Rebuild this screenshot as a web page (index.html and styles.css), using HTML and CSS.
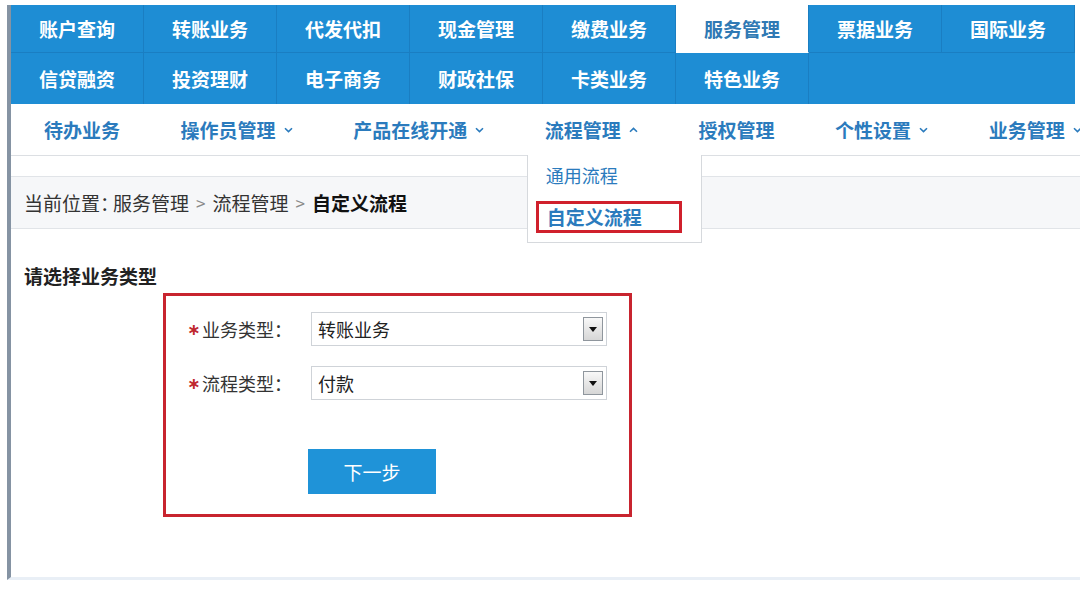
FILE: index.html
```html
<!DOCTYPE html>
<html lang="zh-CN">
<head>
<meta charset="utf-8">
<title>自定义流程</title>
<link rel="stylesheet" href="styles.css">
</head>
<body>
<div class="frame">
  <nav class="topnav">
    <a class="cell">账户查询</a>
    <a class="cell">转账业务</a>
    <a class="cell">代发代扣</a>
    <a class="cell">现金管理</a>
    <a class="cell">缴费业务</a>
    <a class="cell active">服务管理</a>
    <a class="cell">票据业务</a>
    <a class="cell">国际业务</a>
    <a class="cell row2">信贷融资</a>
    <a class="cell row2">投资理财</a>
    <a class="cell row2">电子商务</a>
    <a class="cell row2">财政社保</a>
    <a class="cell row2">卡类业务</a>
    <a class="cell row2">特色业务</a>
    <span class="cell row2 blank"></span>
  </nav>

  <div class="subnav">
    <span class="sitem">待办业务</span>
    <span class="sitem">操作员管理<svg class="chev" viewBox="0 0 9 6"><path d="M1 1.2 L4.5 4.6 L8 1.2" fill="none" stroke="currentColor" stroke-width="1.6"/></svg></span>
    <span class="sitem">产品在线开通<svg class="chev" viewBox="0 0 9 6"><path d="M1 1.2 L4.5 4.6 L8 1.2" fill="none" stroke="currentColor" stroke-width="1.6"/></svg></span>
    <span class="sitem open">流程管理<svg class="chev" viewBox="0 0 9 6"><path d="M1 4.8 L4.5 1.4 L8 4.8" fill="none" stroke="currentColor" stroke-width="1.6"/></svg>
      <div class="dropdown">
        <div class="ditem">通用流程</div>
        <div class="ditem current">自定义流程</div>
      </div>
    </span>
    <span class="sitem">授权管理</span>
    <span class="sitem">个性设置<svg class="chev" viewBox="0 0 9 6"><path d="M1 1.2 L4.5 4.6 L8 1.2" fill="none" stroke="currentColor" stroke-width="1.6"/></svg></span>
    <span class="sitem">业务管理<svg class="chev" viewBox="0 0 9 6"><path d="M1 1.2 L4.5 4.6 L8 1.2" fill="none" stroke="currentColor" stroke-width="1.6"/></svg></span>
  </div>

  <div class="crumb">
    <span class="lead">当前位置：</span><span>服务管理</span><span class="sep">&gt;</span><span>流程管理</span><span class="sep">&gt;</span><b class="here">自定义流程</b>
  </div>

  <h3 class="title">请选择业务类型</h3>

  <div class="formbox">
    <div class="row">
      <label class="label"><span class="req">∗</span>业务类型：</label>
      <div class="select"><span class="val">转账业务</span><span class="sbtn"><svg viewBox="0 0 8 5" class="tri"><path d="M0 0 H8 L4 5 Z" fill="#111"/></svg></span></div>
    </div>
    <div class="row">
      <label class="label"><span class="req">∗</span>流程类型：</label>
      <div class="select"><span class="val">付款</span><span class="sbtn"><svg viewBox="0 0 8 5" class="tri"><path d="M0 0 H8 L4 5 Z" fill="#111"/></svg></span></div>
    </div>
    <button class="next" type="button">下一步</button>
  </div>
</div>
</body>
</html>
```

FILE: styles.css
```css
html, body {
  margin: 0;
  overflow: hidden;
  background: #ffffff;
}
body {
  width: 1080px;
  height: 589px;
  box-sizing: border-box;
  padding-top: 5px;
  font-family: "Noto Sans CJK SC", "Noto Sans", sans-serif;
}
.frame {
  margin-left: 7px;
  border-left: 4px solid #8593a3;
  border-bottom: 3px solid #e9eff6;
  height: 575px;
  box-sizing: border-box;
}

/* top navigation */
.topnav {
  display: grid;
  grid-template-columns: repeat(8, 133px);
  grid-template-rows: 48px 51px;
  width: 1064px;
  background: #1e8dd4;
}
.cell {
  display: flex;
  align-items: center;
  justify-content: center;
  color: #ffffff;
  font-size: 19px;
  font-weight: 700;
  border-right: 1px solid #1a7ec2;
  border-bottom: 1px solid #1a7ec2;
  box-sizing: border-box;
}
.cell.row2 {
  border-bottom: none;
}
.cell.active {
  background: #ffffff;
  color: #2f79b4;
  border-bottom-color: #ffffff;
}
.cell.blank {
  grid-column: span 2;
  border-right: none;
}

/* sub navigation */
.subnav {
  height: 51px;
  border-bottom: 1px solid #dcdfe3;
  display: flex;
  align-items: center;
  gap: 60.6px;
  padding-left: 33px;
  white-space: nowrap;
}
.sitem {
  position: relative;
  display: flex;
  align-items: center;
  height: 100%;
  font-size: 19px;
  font-weight: 700;
  color: #2b7bbd;
  flex: none;
}
.chev {
  width: 9px;
  height: 6px;
  margin-left: 8px;
}
.dropdown {
  position: absolute;
  top: 51px;
  left: -18px;
  width: 175px;
  height: 88px;
  box-sizing: border-box;
  border: 1px solid #d6d9dd;
  border-top: none;
  background: #ffffff;
  z-index: 2;
}
.ditem {
  font-size: 18px;
  font-weight: 400;
  color: #2b7bbd;
  height: 30px;
  line-height: 30px;
  margin-top: 5px;
  padding-left: 18px;
}
.ditem.current {
  margin-top: 11px;
  margin-left: 8px;
  width: 146px;
  height: 32px;
  box-sizing: border-box;
  border: 3px solid #d0202c;
  padding-left: 8px;
  line-height: 25px;
  font-size: 19px;
  font-weight: 700;
}

/* breadcrumb */
.crumb {
  margin-top: 20px;
  height: 53px;
  box-sizing: border-box;
  border-top: 1px solid #e1e4e8;
  border-bottom: 1px solid #e1e4e8;
  background: #f6f7f9;
  display: flex;
  align-items: center;
  padding-left: 13px;
  font-size: 19px;
  color: #333333;
}
.crumb .lead {
  margin-right: -6px;
}
.crumb .sep {
  color: #8a8a8a;
  font-size: 17px;
  padding: 0 7px;
}
.crumb .here {
  color: #111111;
  font-weight: 700;
}

.title {
  margin: 34px 0 4px 13px;
  font-size: 19px;
  line-height: 26px;
  font-weight: 700;
  color: #222222;
}

/* form */
.formbox {
  margin-left: 152px;
  width: 469px;
  height: 224px;
  box-sizing: border-box;
  border: 3px solid #c8242f;
  padding: 16px 22px 0 21px;
}
.row {
  display: flex;
  align-items: center;
  height: 34px;
}
.row + .row {
  margin-top: 20px;
}
.label {
  width: 124px;
  display: flex;
  align-items: center;
  font-size: 18px;
  color: #333333;
}
.req {
  width: 15px;
  color: #c0282e;
  font-size: 16px;
  font-family: "DejaVu Sans", sans-serif;
  font-weight: 700;
}
.select {
  width: 296px;
  height: 34px;
  box-sizing: border-box;
  border: 1px solid #cfd3d8;
  display: flex;
  align-items: center;
  padding-left: 6px;
  font-size: 18px;
  color: #222222;
}
.sbtn {
  margin-left: auto;
  margin-right: 3px;
  width: 20px;
  height: 24px;
  box-sizing: border-box;
  border: 1px solid #8f969d;
  background: linear-gradient(#f8f8f8, #d6d6d6);
  display: flex;
  align-items: center;
  justify-content: center;
}
.tri {
  width: 8px;
  height: 5px;
}
.next {
  display: block;
  margin: 49px 0 0 121px;
  width: 128px;
  height: 45px;
  border: none;
  background: #1f93d8;
  color: #ffffff;
  font-family: inherit;
  font-size: 19px;
}
```
